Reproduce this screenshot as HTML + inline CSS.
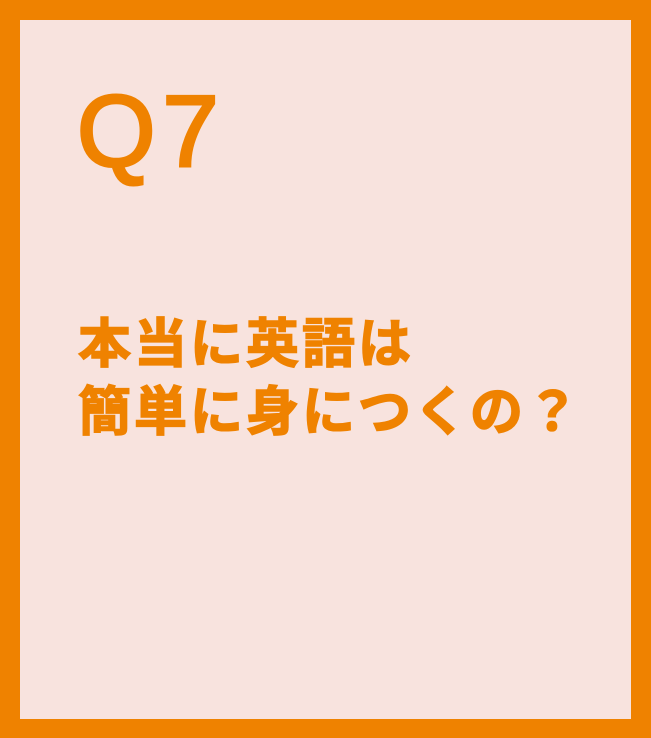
<!DOCTYPE html>
<html><head><meta charset="utf-8"><style>
html,body{margin:0;padding:0}
body{width:651px;height:738px;background:#ef8200;position:relative;overflow:hidden}
.in{position:absolute;left:20px;top:20px;width:611px;height:699px;background:#f8e3de}
.q{position:absolute;left:77px;top:82px;font:101px/1 "Liberation Sans",sans-serif;color:#ef8200;-webkit-text-stroke:3px #ef8200;letter-spacing:7px}
.t{position:absolute;left:78px;top:311px;font:bold 53px/68px "Liberation Sans","Noto Sans CJK JP",sans-serif;color:#ef8200;letter-spacing:3px;white-space:nowrap;-webkit-text-stroke:1.5px #ef8200}
</style></head><body>
<div class="in"></div>
<div class="q">Q7</div>
<div class="t">本当に英語は<br>簡単に身につくの？</div>
</body></html>
